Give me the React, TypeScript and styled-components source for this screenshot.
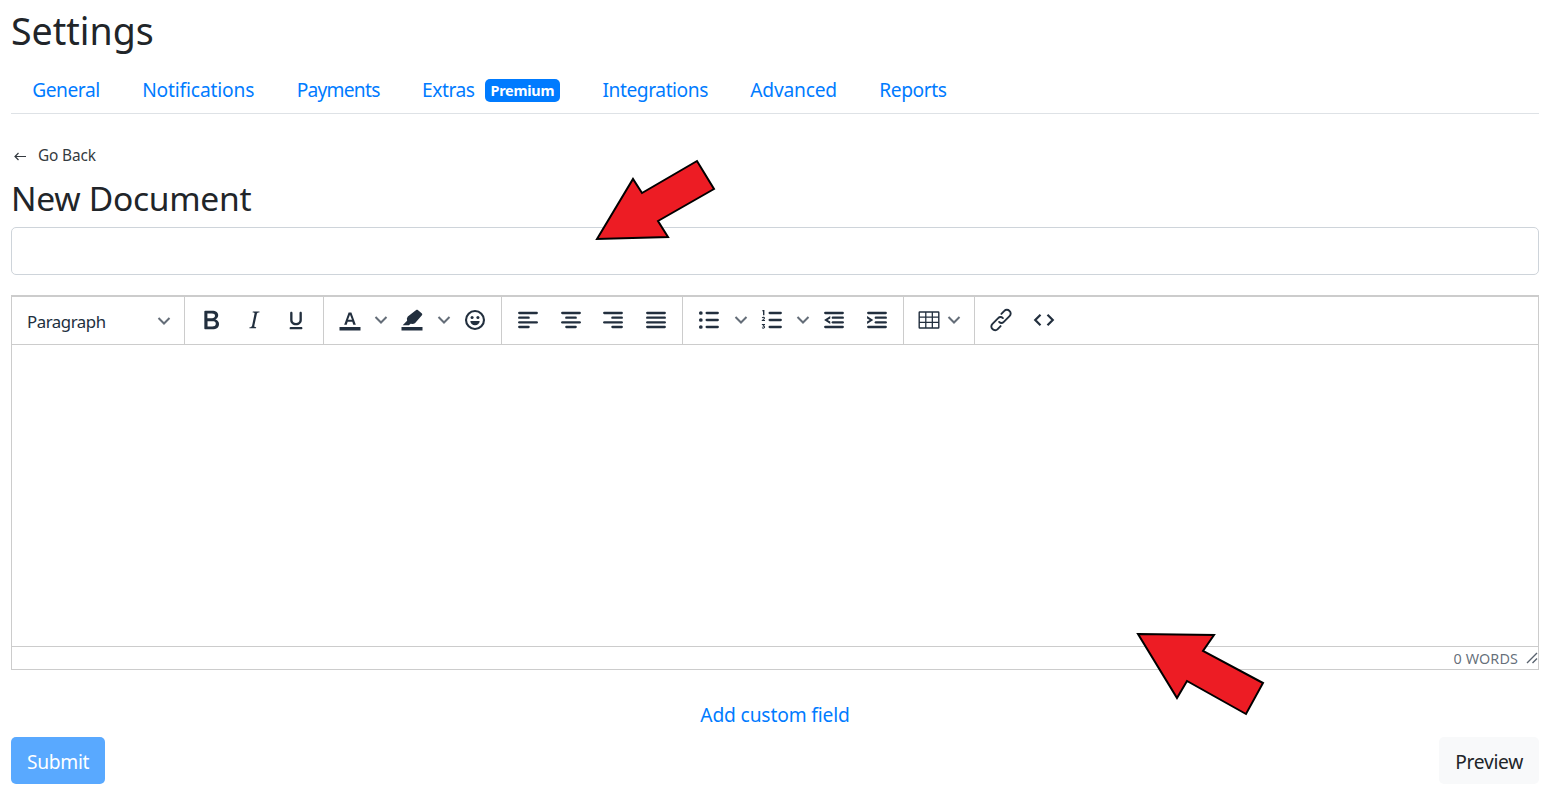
import styled, { createGlobalStyle } from 'styled-components';
import { ReactNode } from 'react';

const GlobalStyle = createGlobalStyle`
  html, body {
    margin: 0;
    padding: 0;
    background: #ffffff;
  }
  * {
    box-sizing: border-box;
  }
`;

const Page = styled.div`
  position: relative;
  display: flex;
  flex-direction: column;
  height: 792px;
  padding: 0 8px 0 11px;
  overflow: hidden;
  font-family: 'Noto Sans', 'Open Sans', sans-serif;
  color: #212529;
`;

const Title = styled.h1`
  margin: 8px 0 0;
  font-size: 37.5px;
  line-height: 46px;
  font-weight: 400;
`;

const Tabs = styled.nav`
  display: flex;
  align-items: center;
  height: 48px;
  margin-top: 12px;
  border-bottom: 1px solid #dee2e6;
`;

const Tab = styled.a<{ $tracking?: number }>`
  display: flex;
  align-items: center;
  gap: 10px;
  padding: 0 21.2px;
  font-size: 19.2px;
  letter-spacing: ${(p) => p.$tracking ?? -0.45}px;
  color: #007bff;
`;

const Badge = styled.span`
  display: inline-block;
  margin-top: 2px;
  padding: 0 6px;
  height: 23px;
  line-height: 24px;
  border-radius: 5px;
  background: #007bff;
  color: #ffffff;
  font-size: 14.4px;
  font-weight: 700;
  letter-spacing: -0.25px;
`;

const BackLink = styled.a`
  display: flex;
  align-items: center;
  gap: 11px;
  margin-top: 30px;
  height: 22px;
  font-size: 15.4px;
  letter-spacing: -0.15px;
  color: #343a40;
`;

const Heading = styled.h2`
  margin: 10px 0 0;
  font-size: 33.6px;
  line-height: 44px;
  font-weight: 400;
  letter-spacing: -0.3px;
`;

const NameInput = styled.input`
  display: block;
  width: 100%;
  height: 48px;
  margin-top: 7px;
  border: 1px solid #ced4da;
  border-radius: 5px;
  outline: none;
`;

const Editor = styled.section`
  display: flex;
  flex-direction: column;
  height: 375px;
  margin-top: 20px;
  border: 1px solid #ccc;
  border-top-width: 2px;
`;

const Toolbar = styled.div`
  display: flex;
  height: 48px;
  border-bottom: 1px solid #ccc;
`;

const Group = styled.div<{ $right?: number }>`
  display: flex;
  align-items: center;
  padding: 0 ${(p) => p.$right ?? 5}px 2px 5px;
  border-right: 1px solid #ccc;

  &:last-child {
    border-right: 0;
  }
`;

const FormatSelect = styled.div`
  display: flex;
  align-items: center;
  justify-content: space-between;
  width: 173px;
  height: 100%;
  padding: 1px 13px 0 15px;
  border-right: 1px solid #ccc;
  font-size: 16.8px;
  letter-spacing: -0.45px;
  color: #222f3e;
`;

const ToolButton = styled.button<{ $width?: number }>`
  display: flex;
  align-items: center;
  justify-content: center;
  width: ${(p) => p.$width ?? 42.5}px;
  height: 36px;
  padding: 0;
  border: 0;
  background: none;
`;

const Canvas = styled.div`
  flex: 1;
`;

const StatusBar = styled.div`
  display: flex;
  align-items: center;
  justify-content: flex-end;
  gap: 8px;
  height: 23px;
  border-top: 1px solid #ccc;
  font-size: 14.4px;
  letter-spacing: 0.1px;
  color: rgba(34, 47, 62, 0.7);
`;

const CustomField = styled.a`
  align-self: center;
  margin-top: 32px;
  height: 26px;
  line-height: 26px;
  font-size: 19.2px;
  letter-spacing: -0.15px;
  color: #007bff;
`;

const Actions = styled.div`
  display: flex;
  justify-content: space-between;
  margin-top: 9px;
`;

const ActionButton = styled.button<{ $primary?: boolean }>`
  height: 47px;
  padding: 2px 16px 0;
  border: 0;
  border-radius: 5px;
  font-family: inherit;
  font-size: 19.2px;
  letter-spacing: -0.3px;
  background: ${(p) => (p.$primary ? '#59a9ff' : '#f8f9fa')};
  color: ${(p) => (p.$primary ? '#ffffff' : '#212529')};
`;

const ArrowLayer = styled.svg`
  position: absolute;
  top: 0;
  left: 0;
  width: 1547px;
  height: 792px;
  pointer-events: none;
`;

const ChevronIcon = styled.svg`
  flex-shrink: 0;
  width: 14px;
  height: 14px;
`;

const Glyph = ({ children, box = '0 0 24 24' }: { children: ReactNode; box?: string }) => (
  <svg width="28" height="28" viewBox={box} fill="#222f3e">
    {children}
  </svg>
);

const Chevron = () => (
  <ChevronIcon viewBox="0 0 14 14" fill="none" stroke="#222f3e" strokeOpacity="0.7" strokeWidth="2">
    <path d="M1.5 4l5.5 5.5L12.5 4" />
  </ChevronIcon>
);

// four bars, [x, width] from top to bottom
const Bars = ({ rows }: { rows: number[][] }) => (
  <Glyph>
    {rows.map(([x, w], i) => (
      <rect key={i} x={x} y={5 + i * 4} width={w} height="2" rx="1" />
    ))}
  </Glyph>
);

const Indent = ({ flip }: { flip?: boolean }) => (
  <Glyph>
    <rect x="3.500" y="5" width="17" height="2" rx="1" />
    <rect x="10" y="9" width="10.500" height="2" rx="1" />
    <rect x="10" y="13" width="10.500" height="2" rx="1" />
    <rect x="3.500" y="17" width="17" height="2" rx="1" />
    <path d={flip ? 'M3.500 8.600L8.800 12l-5.300 3.400v-2.200L5.800 12 3.500 10.800z' : 'M8.800 8.600L3.500 12l5.300 3.400v-2.200L6.500 12l2.300-1.200z'} />
  </Glyph>
);

const App = () => {
  return (
    <Page>
      <GlobalStyle />
      <Title>Settings</Title>
      <Tabs>
        <Tab>General</Tab>
        <Tab $tracking={-0.15}>Notifications</Tab>
        <Tab $tracking={-0.75}>Payments</Tab>
        <Tab>
          Extras <Badge>Premium</Badge>
        </Tab>
        <Tab>Integrations</Tab>
        <Tab $tracking={-0.2}>Advanced</Tab>
        <Tab>Reports</Tab>
      </Tabs>

      <BackLink>
        <svg width="16" height="16" viewBox="0 0 16 16" fill="none" stroke="#343a40" strokeWidth="1.2">
          <path d="M15 9.500H4M7.500 6L4 9.500 7.500 13" />
        </svg>
        Go Back
      </BackLink>
      <Heading>New Document</Heading>
      <NameInput />

      <Editor>
        <Toolbar>
          <FormatSelect>
            Paragraph
            <Chevron />
          </FormatSelect>
          <Group>
            <ToolButton>
              <Glyph box="1.500 1.500 21 21">
                <path d="M7.8 19c-.3 0-.5 0-.6-.2l-.2-.5V5.700c0-.2 0-.4.2-.5l.6-.2h5c1.500 0 2.700.3 3.500 1 .7.6 1.100 1.400 1.100 2.500a3 3 0 01-.6 1.900c-.4.6-1 1-1.600 1.200.4.1.9.3 1.300.6s.8.7 1 1.200c.4.4.5 1 .5 1.600 0 1.300-.4 2.300-1.300 3-.8.7-2.100 1-3.800 1H7.800zm5-8.300c.6 0 1.200-.1 1.600-.5.4-.3.6-.7.6-1.300 0-1.100-.8-1.700-2.300-1.700H9.300v3.500h3.400zm.5 6c.7 0 1.300-.1 1.700-.4.4-.4.6-.9.6-1.500s-.2-1-.7-1.400c-.4-.3-1-.4-2-.4H9.400v3.800h4z" />
              </Glyph>
            </ToolButton>
            <ToolButton>
              <Glyph>
                <path d="M16.700 4.700l-.1.9h-.3c-.6 0-1 0-1.400.3-.3.3-.4.6-.5 1.100l-2.100 9.800v.6c0 .5.4.8 1.400.8h.2l-.2.8H8l.2-.8h.2c1.100 0 1.800-.5 2-1.500l2-9.800.1-.5c0-.6-.4-.8-1.400-.8h-.3l.2-.9h5.800z" />
              </Glyph>
            </ToolButton>
            <ToolButton>
              <Glyph>
                <path d="M16 5c.6 0 1 .4 1 1v6c0 2.800-2.200 4.500-5 4.500S7 14.800 7 12V6c0-.6.4-1 1-1s1 .4 1 1v6c0 1.700 1.300 2.600 3 2.600s3-.9 3-2.600V6c0-.6.4-1 1-1zM7.500 18h9c.6 0 1 .4 1 1s-.4 1-1 1h-9a1 1 0 110-2z" />
              </Glyph>
            </ToolButton>
          </Group>
          <Group>
            <ToolButton>
              <Glyph>
                <path d="M10.800 5.500h2.400L17 16h-2.200l-.8-2.500h-4L9.200 16H7zm-.5 6.300h3.400L12 7.500z" />
                <rect x="3" y="18" width="18" height="3" />
              </Glyph>
            </ToolButton>
            <ToolButton $width={20}>
              <Chevron />
            </ToolButton>
            <ToolButton>
              <Glyph>
                <path d="M17 3.500l3.500 3c.4.400.4 1 0 1.400l-6 6.800-1.700.7-2-.2-1.500 1.300H4l3.800-3.800-.2-2 .8-1.700 7.200-5.500c.4-.4 1-.4 1.400 0z" />
                <rect x="3" y="18" width="18" height="3" />
              </Glyph>
            </ToolButton>
            <ToolButton $width={20}>
              <Chevron />
            </ToolButton>
            <ToolButton>
              <svg width="28" height="28" viewBox="0 0 24 24" fill="none">
                <circle cx="12" cy="12" r="7.700" stroke="#222f3e" strokeWidth="1.800" />
                <circle cx="9.500" cy="9.800" r="1.300" fill="#222f3e" />
                <circle cx="14.500" cy="9.800" r="1.300" fill="#222f3e" />
                <path d="M8 12.800h8c0 2.200-1.800 3.700-4 3.700s-4-1.500-4-3.700z" fill="#222f3e" />
              </svg>
            </ToolButton>
          </Group>
          <Group>
            <ToolButton>
              <Bars rows={[[3.500, 17], [3.500, 10], [3.500, 17], [3.500, 10]]} />
            </ToolButton>
            <ToolButton>
              <Bars rows={[[3.500, 17], [7, 10], [3.500, 17], [7, 10]]} />
            </ToolButton>
            <ToolButton>
              <Bars rows={[[3.500, 17], [10.500, 10], [3.500, 17], [10.500, 10]]} />
            </ToolButton>
            <ToolButton>
              <Bars rows={[[3.500, 17], [3.500, 17], [3.500, 17], [3.500, 17]]} />
            </ToolButton>
          </Group>
          <Group>
            <ToolButton>
              <Glyph>
                <circle cx="5" cy="6" r="1.600" />
                <circle cx="5" cy="12" r="1.600" />
                <circle cx="5" cy="18" r="1.600" />
                <rect x="9" y="5" width="11.500" height="2" rx="1" />
                <rect x="9" y="11" width="11.500" height="2" rx="1" />
                <rect x="9" y="17" width="11.500" height="2" rx="1" />
              </Glyph>
            </ToolButton>
            <ToolButton $width={20}>
              <Chevron />
            </ToolButton>
            <ToolButton>
              <Glyph>
                <path d="M4 3.500h1.500v4.500H4.300V4.600h-.8zM3.200 10c.3-.5.8-.8 1.400-.8.900 0 1.400.5 1.400 1.100 0 .6-.4 1-1 1.400l-.5.4H6v.8H3.200v-.7l1.400-1.100c.3-.3.4-.5.4-.7 0-.2-.2-.4-.5-.4s-.5.2-.7.5zM3.300 15.400H6v.7l-.9.8c.6.1 1 .6 1 1.200 0 .8-.7 1.300-1.500 1.300-.6 0-1.100-.2-1.400-.7l.6-.5c.2.300.5.400.8.400s.5-.2.500-.5-.3-.5-.7-.5h-.5v-.6l.8-.7H3.300z" />
                <rect x="9" y="5" width="11.500" height="2" rx="1" />
                <rect x="9" y="11" width="11.500" height="2" rx="1" />
                <rect x="9" y="17" width="11.500" height="2" rx="1" />
              </Glyph>
            </ToolButton>
            <ToolButton $width={20}>
              <Chevron />
            </ToolButton>
            <ToolButton>
              <Indent />
            </ToolButton>
            <ToolButton>
              <Indent flip />
            </ToolButton>
          </Group>
          <Group $right={15}>
            <ToolButton $width={40}>
              <Glyph>
                <path d="M4 4.500h16a1 1 0 011 1v13a1 1 0 01-1 1H4a1 1 0 01-1-1v-13a1 1 0 011-1zm.2 1.300v3.200h4.500V5.800zm5.600 0v3.200h4.500V5.800zm5.600 0v3.200h4.400V5.800zM4.200 10.100v3.400h4.500v-3.400zm5.600 0v3.400h4.500v-3.400zm5.600 0v3.400h4.400v-3.400zM4.200 14.600v3.600h4.500v-3.600zm5.600 0v3.600h4.500v-3.600zm5.600 0v3.600h4.400v-3.600z" fillRule="evenodd" />
              </Glyph>
            </ToolButton>
            <ToolButton $width={10}>
              <Chevron />
            </ToolButton>
          </Group>
          <Group>
            <ToolButton>
              <svg width="28" height="28" viewBox="1 1 22 22" fill="none" stroke="#222f3e" strokeWidth="1.500" strokeLinecap="round">
                <path d="M10.500 13.500c1.200 1.200 2.600 1.100 3.700 0l4.500-4.500c1.200-1.200 1.200-3 0-4.100-1.200-1.200-3-1.200-4.100 0L12.300 7.200" />
                <path d="M13.500 10.500c-1.200-1.200-2.600-1.100-3.700 0l-4.500 4.500c-1.200 1.200-1.200 3 0 4.100 1.200 1.200 3 1.200 4.100 0l2.300-2.300" />
              </svg>
            </ToolButton>
            <ToolButton>
              <svg width="28" height="28" viewBox="0 0 24 24" fill="none" stroke="#222f3e" strokeWidth="1.900">
                <path d="M9 7.500L4.500 12 9 16.500M15 7.500l4.500 4.500-4.500 4.500" />
              </svg>
            </ToolButton>
          </Group>
        </Toolbar>
        <Canvas />
        <StatusBar>
          0 WORDS
          <svg width="12" height="12" viewBox="0 0 12 12" fill="none" stroke="#222f3e" strokeOpacity="0.75" strokeWidth="1.400">
            <path d="M1 11L11 1M6.500 11L11 6.500" />
          </svg>
        </StatusBar>
      </Editor>

      <CustomField>Add custom field</CustomField>
      <Actions>
        <ActionButton $primary>Submit</ActionButton>
        <ActionButton>Preview</ActionButton>
      </Actions>

      <ArrowLayer viewBox="0 0 1547 792">
        <polygon
          points="597,239 633,179 642,193 697,161 714,189 658,221 668,237"
          fill="#ed1c24"
          stroke="#000"
          strokeWidth="2"
        />
        <polygon
          points="1138,634 1214,635 1203,651 1263,683 1246,714 1187,681 1177,698"
          fill="#ed1c24"
          stroke="#000"
          strokeWidth="2"
        />
      </ArrowLayer>
    </Page>
  );
};

export default App;
